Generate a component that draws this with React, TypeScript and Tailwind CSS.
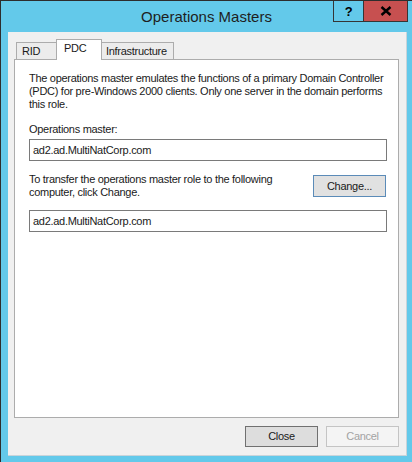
import React from "react";

const F = { fontFamily: '"Liberation Sans", Arial, sans-serif' };

export default function App() {
  return (
    <div
      className="w-[412px] h-[462px] bg-[#63c9ea] border-t border-l border-[#2d2d2d] flex flex-col text-[11px] tracking-[-0.29px] leading-[13px] text-[#1a1a1a] overflow-hidden"
      style={F}
    >
      <div className="relative h-[31px] flex items-center justify-center shrink-0">
        <span className="text-[15px] tracking-normal text-[#1e1e1e] mt-[-1px]">Operations Masters</span>
        <div className="absolute right-[4px] top-[-1px] flex">
          <div className="w-[30px] h-[22px] border border-[#353535] border-r-0 flex items-center justify-center text-[13px] font-bold text-black">
            ?
          </div>
          <div className="w-[45px] h-[22px] bg-[#c75050] border border-[#353535] flex items-center justify-center">
            <svg width="12" height="10" viewBox="0 0 12 10">
              <path d="M1.5 1 L10.5 9 M10.5 1 L1.5 9" stroke="#000" strokeWidth="2.4" />
            </svg>
          </div>
        </div>
      </div>
      <div className="ml-[7px] mr-[5px] h-[424px] bg-[#f0f0f0] border-b border-r border-[#c8d4da] flex flex-col">
        <div className="ml-[6px] mr-[7px] mt-[7px] flex flex-col">
          <div className="flex items-end h-[20px] pl-[2px]">
            <div className="w-[41px] h-[17px] border border-b-0 border-[#acacac] bg-[#ececec] pl-[5px] pt-[2px]">RID</div>
            <div className="relative z-10 ml-[-1px] mb-[-1px] w-[46px] h-[21px] border border-b-0 border-[#acacac] bg-white pl-[7px] pt-[2px]">PDC</div>
            <div className="ml-[-1px] w-[73px] h-[17px] border border-b-0 border-[#acacac] bg-[#ececec] pl-[4px] pt-[2px] whitespace-nowrap">Infrastructure</div>
          </div>
          <div className="h-[359px] bg-white border border-[#acacac] pl-[14px] pr-[11px] pt-[12px] flex flex-col whitespace-nowrap">
            <p>
              The operations master emulates the functions of a primary Domain Controller
              <br />
              (PDC) for pre-Windows 2000 clients. Only one server in the domain performs
              <br />
              this role.
            </p>
            <p className="mt-[12px]">Operations master:</p>
            <div className="mt-[3px] h-[22px] border border-[#7a7a7a] pl-[3px] flex items-center">ad2.ad.MultiNatCorp.com</div>
            <div className="mt-[12px] flex items-start justify-between">
              <p>
                To transfer the operations master role to the following
                <br />
                computer, click Change.
              </p>
              <div className="mt-[2px] mr-[1px] w-[73px] h-[22px] bg-[#e1e1e1] border border-[#5b8bb8] flex items-center justify-center">
                Change...
              </div>
            </div>
            <div className="mt-[11px] h-[22px] border border-[#7a7a7a] pl-[3px] flex items-center">ad2.ad.MultiNatCorp.com</div>
          </div>
        </div>
        <div className="mt-[8px] mr-[7px] flex justify-end gap-[8px]">
          <div className="w-[73px] h-[21px] bg-[#dddddd] border border-[#707070] flex items-center justify-center">Close</div>
          <div className="w-[73px] h-[21px] bg-[#f4f4f4] border border-[#c4c4c4] text-[#a3a3a3] flex items-center justify-center">Cancel</div>
        </div>
      </div>
    </div>
  );
}
